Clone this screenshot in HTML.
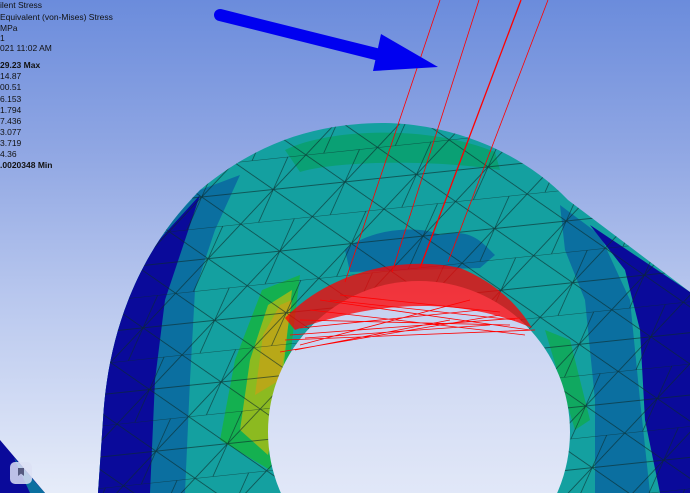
<!DOCTYPE html>
<html><head><style>
html,body{margin:0;padding:0;width:690px;height:493px;overflow:hidden}
body{background:linear-gradient(180deg,#6b8cdc 0%,#8fa6e3 30%,#b8c7ee 60%,#e6ecf9 100%);font-family:"Liberation Sans",sans-serif;position:relative}
.t{position:absolute;left:0;font-size:8.5px;color:#111;line-height:13px;white-space:nowrap}
svg{position:absolute;left:0;top:0}
.icon{position:absolute;left:10px;top:462px;width:22px;height:22px;border-radius:5px;background:rgba(220,225,245,.85)}
.icon:after{content:"";position:absolute;left:8px;top:6px;width:6px;height:8px;background:#555a80;clip-path:polygon(0 0,100% 0,100% 100%,50% 70%,0 100%)}
</style></head><body>
<svg width="690" height="493" viewBox="0 0 690 493">
<defs>
<clipPath id="c"><path d="M98,493 L103,420 C108,330 140,250 200,190 C260,140 320,123 385,123 C450,124 520,150 568,200 L690,292 L690,493 Z"/></clipPath>
<pattern id="m" width="72" height="62" patternUnits="userSpaceOnUse" patternTransform="rotate(-6)">
<path d="M0,0 L72,0 M0,31 L72,31 M0,0 L36,31 L72,0 M0,62 L36,31 L72,62 M36,31 L18,62 M36,31 L54,0" stroke="#0b2a2a" stroke-width=".7" fill="none"/>
</pattern>
<linearGradient id="h" x1="0" y1="0" x2="0" y2="1"><stop offset="0" stop-color="#c3cff0"/><stop offset="1" stop-color="#eef2fb"/></linearGradient>
</defs>
<path d="M0,440 L45,493 L0,493 Z" fill="#0a0a9a"/>
<path d="M14,458 L45,493 L30,493 Z" fill="#0b6fa0"/>
<g clip-path="url(#c)">
<rect width="690" height="493" fill="#14a0a0"/>
<path d="M90,493 L95,380 L115,300 L150,245 L200,190 L240,175 L215,230 L195,290 L190,380 L185,493 Z" fill="#0b6fa0"/>
<path d="M90,493 L98,380 L118,300 L150,250 L200,195 L185,240 L165,300 L155,380 L150,493 Z" fill="#0a0a9a"/>
<path d="M560,205 L600,235 L630,300 L640,400 L650,493 L595,493 L595,400 L585,300 L565,250 Z" fill="#0b6fa0"/>
<path d="M590,225 L690,292 L690,493 L660,493 L645,420 L640,330 L625,270 Z" fill="#0a0a9a"/>
<path d="M285,150 C330,128 430,125 495,152 L500,170 C440,160 340,160 300,172 Z" fill="#0aa074"/>
<path d="M345,250 C370,228 420,225 440,235 C470,228 480,240 495,255 L480,268 L350,272 Z" fill="#0b6fa0"/>
<path d="M220,440 L235,360 L262,290 L300,275 L285,400 L270,470 Z" fill="#14b050"/>
<path d="M240,430 L250,360 L268,305 L292,290 L280,400 L268,455 Z" fill="#8cba20"/>
<path d="M255,395 L263,335 L280,305 L292,300 L280,380 Z" fill="#b8a818"/>
<path d="M545,330 L570,340 L590,420 L575,430 Z" fill="#10a860"/>
<rect width="690" height="493" fill="url(#m)" opacity=".8"/>
</g>
<circle cx="419" cy="432" r="151" fill="url(#h)"/>
<g stroke="#f00" stroke-width=".8" fill="none">
<path d="M440,0 L345,282"/><path d="M479,0 L392,272"/><path d="M521,0 L420,268" stroke-width="1.3"/><path d="M548,0 L448,262"/>
<path d="M285,318 C330,272 400,255 460,268 C490,280 515,300 532,328 C480,305 400,292 295,330 Z" fill="#f00" stroke="none" opacity=".75"/>
<path d="M285,340 L535,330 M290,335 L520,318 M300,320 L510,325 M300,345 L470,300 M320,300 L530,330 M280,352 L500,315 M310,310 L525,335 M295,350 L450,320 M330,300 L515,320 M305,338 L490,325 M340,295 L500,312 M300,328 L480,310"/>
</g>
<path d="M220,15 L380,55" stroke="#0000f0" stroke-width="12" stroke-linecap="round"/>
<path d="M381,34 L438,67 L373,71 Z" fill="#0000f0"/>
</svg>
<div class="t" style="top:-1px">ilent Stress</div>
<div class="t" style="top:11px">Equivalent (von-Mises) Stress</div>
<div class="t" style="top:22px">MPa</div>
<div class="t" style="top:32px">1</div>
<div class="t" style="top:42px">021 11:02 AM</div>
<div class="t" style="top:59px;font-weight:bold">29.23 Max</div>
<div class="t" style="top:70px">14.87</div>
<div class="t" style="top:81px">00.51</div>
<div class="t" style="top:93px">6.153</div>
<div class="t" style="top:104px">1.794</div>
<div class="t" style="top:115px">7.436</div>
<div class="t" style="top:126px">3.077</div>
<div class="t" style="top:137px">3.719</div>
<div class="t" style="top:148px">4.36</div>
<div class="t" style="top:159px;font-weight:bold">.0020348 Min</div>
<div class="icon"></div>
</body></html>
